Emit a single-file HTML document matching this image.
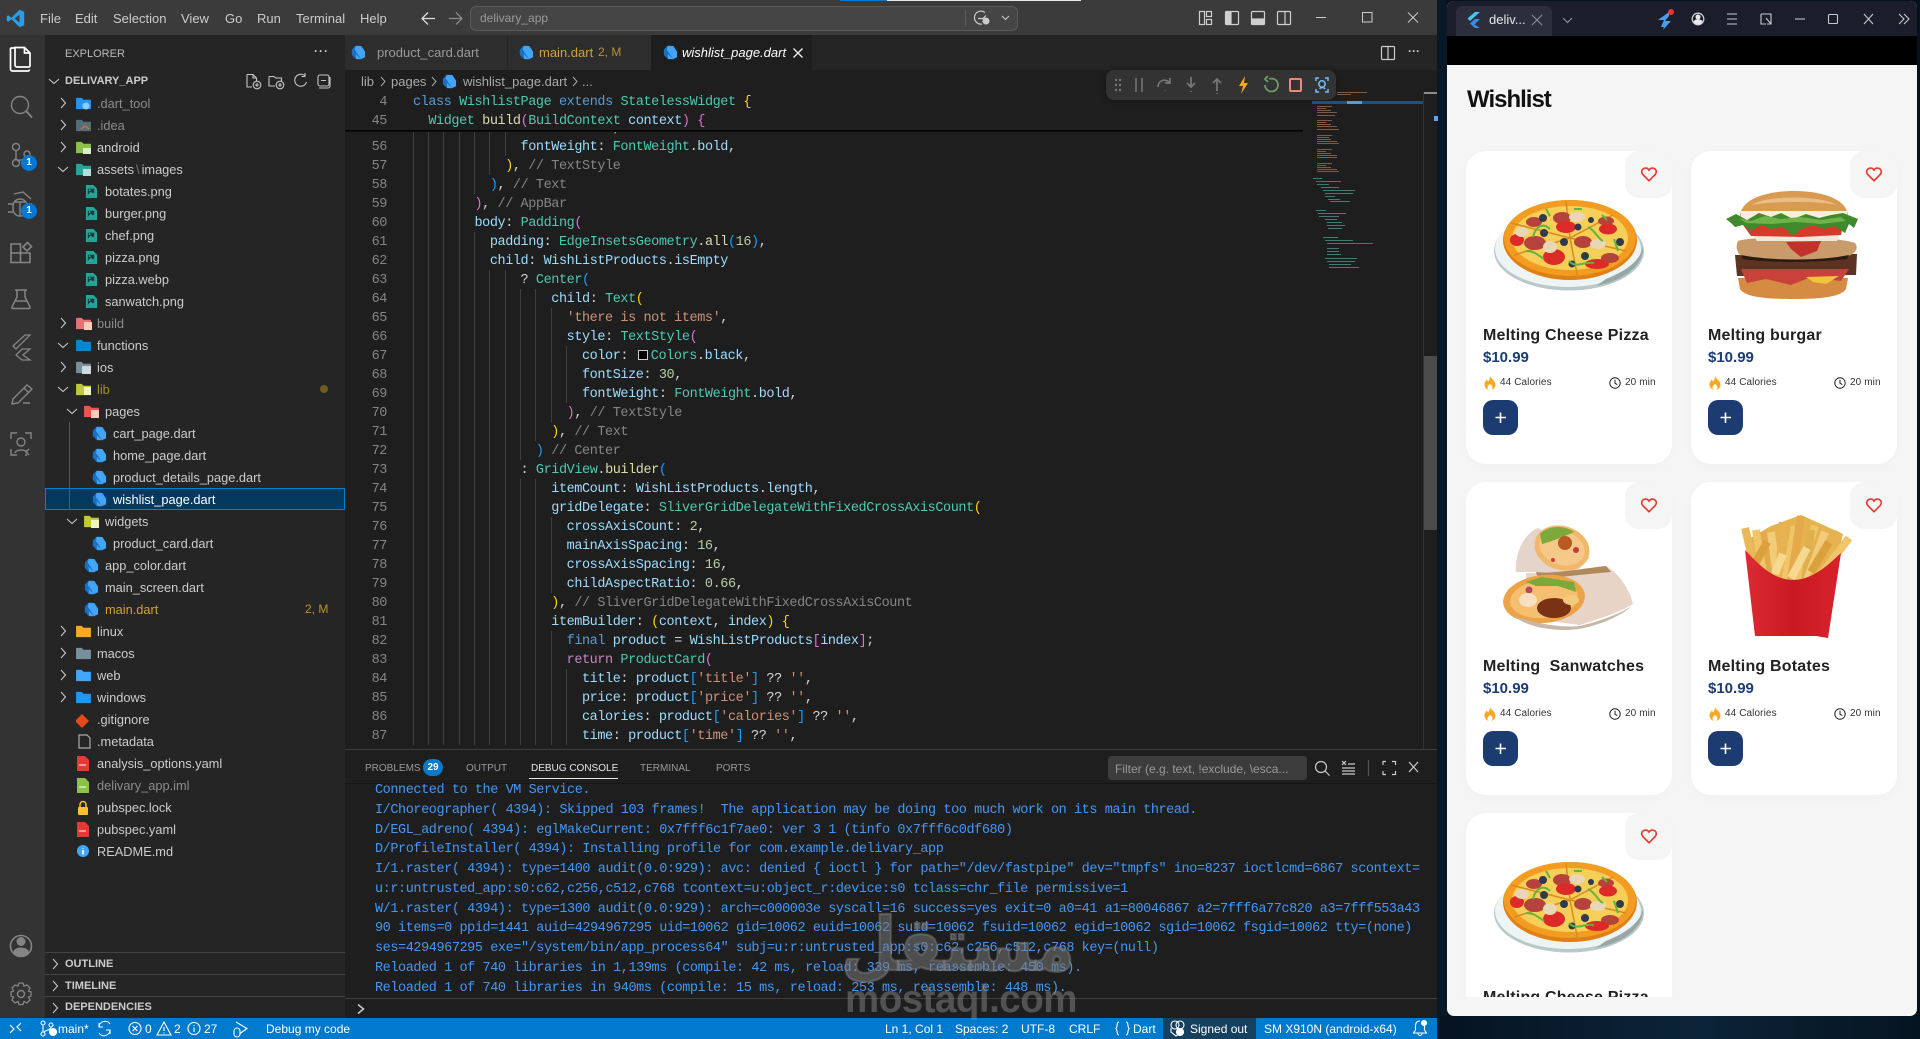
<!DOCTYPE html>
<html lang="en"><head><meta charset="utf-8"><title>delivary_app</title>
<style>
html,body{margin:0;padding:0;width:1920px;height:1039px;overflow:hidden;background:#06111c;font-family:"Liberation Sans",sans-serif}
div,span.a,svg.a,pre.a{position:absolute}
.t{position:absolute;white-space:pre}
.r{position:absolute;height:22px;line-height:23px;font-size:12.800px;color:#ccc;white-space:pre}
.m{position:absolute;top:9px;line-height:19px;font-size:13px;color:#ccc}
.tab{position:absolute;top:35px;height:35px;background:#2d2d2d}
.lbl{position:absolute;top:35px;line-height:35px;font-size:13px;white-space:pre}
.mono{font-family:"Liberation Mono",monospace;font-size:13.500px;letter-spacing:-.42px;white-space:pre}
.k{color:#569cd6}.c{color:#4ec9b0}.p{color:#9cdcfe}.f{color:#dcdcaa}.s{color:#ce9178}.n{color:#b5cea8}.g{color:#858585}.w{color:#d4d4d4}.y{color:#ffd700}.v{color:#da70d6}.b{color:#179fff}.u{color:#c586c0}
.pt{position:absolute;top:759px;line-height:20px;font-size:10px;color:#9a9a9a;white-space:pre}
.st{position:absolute;top:1020px;line-height:19px;font-size:12px;color:#fff;white-space:pre}
.sec{position:absolute;left:65px;line-height:22px;font-size:11px;font-weight:bold;color:#ccc;white-space:pre}
.card{position:absolute;width:206px;height:313px;background:#fff;border-radius:20px;box-shadow:0 3px 12px rgba(0,0,0,.018)}
.hb{position:absolute;right:0;top:0;width:47px;height:47px;background:#f5f5f5;border-radius:14px 20px 14px 14px}
.ct{position:absolute;left:17px;top:175px;line-height:20px;font-size:16px;font-weight:bold;color:#222;letter-spacing:.2px;white-space:pre}
.cp{position:absolute;left:17px;top:197px;line-height:19px;font-size:15px;font-weight:bold;color:#1c3c72;white-space:pre}
.cc{position:absolute;top:225px;line-height:14px;font-size:10px;color:#333;letter-spacing:.1px;white-space:pre}
.btn{position:absolute;left:17px;top:249px;width:35px;height:35px;background:#1c3b70;border-radius:10px}
</style></head>
<body>
<svg width="0" height="0" style="position:absolute">
<defs>
<symbol id="dart" viewBox="0 0 16 16"><path d="M5 .8 11 1 15 7 15 13 10.500 15.200 5.500 15 1 10.500 1 5z" fill="#42a5f5"/><path d="M5 .8 1 5 1 10.500 5.500 15 5 9.500 11 15.200 4 5z" fill="#1a6fc0"/></symbol>
<symbol id="img" viewBox="0 0 14 16"><path d="M1 1h8l4 4v10H1z" fill="#26a69a"/><path d="M3 5h7v8H3z" fill="#173f3d"/><path d="M3 12l3-4 2 2 2-1v4H3z" fill="#26a69a"/><circle cx="5" cy="6.500" r="1" fill="#26a69a"/></symbol>
<symbol id="fold" viewBox="0 0 16 14"><path d="M0 1h6l2 2h8v10H0z" fill="currentColor"/></symbol>
<symbol id="heart" viewBox="0 0 24 24"><path d="M12 21 4 13C1 10 2 5 6.500 4.200 9 3.800 11 5 12 7 13 5 15 3.800 17.500 4.200 22 5 23 10 20 13z" fill="none" stroke="#e53b30" stroke-width="2.200" stroke-linejoin="round"/></symbol>
<symbol id="flame" viewBox="0 0 12 14"><path d="M6 0C7 3 11 4 11.500 8.500 11.500 12 9 14 6 14S.5 12 .5 8.500C.5 6 2 5 2.500 3.500 3.500 4.500 4 5 4.300 5.500 5 4 6 2.500 6 0z" fill="#f9a825"/><path d="M6 8C7.500 9 8.500 10 8.500 11.500 8.500 13 7.300 14 6 14S3.500 13 3.500 11.500C3.500 10 5 9 6 8z" fill="#fff"/></symbol>
<symbol id="clock" viewBox="0 0 12 12"><circle cx="6" cy="6" r="5.200" fill="none" stroke="#222" stroke-width="1"/><path d="M6 2.800V6.300L8.300 7.500" fill="none" stroke="#222" stroke-width="1"/></symbol>
<symbol id="pizza" viewBox="0 0 206 160">
<ellipse cx="103" cy="100" rx="75" ry="39.500" fill="#b9c9c9"/><ellipse cx="102" cy="98" rx="73" ry="38" fill="#eef3f3"/><path d="M140 128C160 120 174 110 177 96 178 110 165 128 130 135z" fill="#98a6a8"/>
<ellipse cx="104" cy="89" rx="67" ry="40" fill="#e07f14"/><ellipse cx="104" cy="87" rx="66" ry="38" fill="#f29d22"/><ellipse cx="104" cy="87" rx="58" ry="32" fill="#f6cf58"/>
<path d="M104 87 100 50M104 87 147 64M104 87 160 100M104 87 112 128M104 87 48 104M104 87 45 72" stroke="#d98a20" stroke-width="1.500"/>
<g fill="#b5433c"><ellipse cx="68" cy="71" rx="8" ry="5"/><ellipse cx="96" cy="67" rx="9" ry="6"/><ellipse cx="69" cy="92" rx="11" ry="7"/><ellipse cx="117" cy="91" rx="9" ry="6"/><ellipse cx="140" cy="70" rx="8" ry="4.500"/><ellipse cx="144" cy="107" rx="9" ry="5"/></g>
<g fill="#dc2a28"><ellipse cx="100" cy="76" rx="10" ry="6"/><ellipse cx="88" cy="106" rx="11" ry="8"/><ellipse cx="142" cy="78" rx="9" ry="5.500"/><ellipse cx="131" cy="113" rx="12" ry="5"/><ellipse cx="51" cy="89" rx="7" ry="6"/></g>
<g fill="#e9d6b4"><ellipse cx="56" cy="81" rx="7" ry="5"/><ellipse cx="84" cy="96" rx="7" ry="6"/><ellipse cx="111" cy="66" rx="8" ry="5"/><ellipse cx="132" cy="93" rx="8" ry="5"/></g>
<g fill="#2f3b4d"><circle cx="77" cy="67" r="4"/><circle cx="78" cy="82" r="4"/><circle cx="112" cy="76" r="3.500"/><circle cx="125" cy="69" r="3"/><circle cx="98" cy="91" r="4"/><circle cx="154" cy="91" r="4"/><circle cx="119" cy="105" r="4"/><circle cx="106" cy="113" r="3.500"/></g>
<g fill="none" stroke="#62b53a" stroke-width="2"><path d="M67 86C70 74 78 72 84 78"/><path d="M60 100C68 100 72 104 78 108"/><path d="M103 110C110 118 118 110 128 112"/><path d="M122 76C130 80 132 88 137 90"/><path d="M80 58 84 65M108 58H116M136 64 141 69M148 88 152 100"/></g>
</symbol>
</defs>
</svg>

<!-- wallpaper strip tones -->
<div style="left:1437px;top:0;width:10px;height:1039px;background:#071826"></div>
<div style="left:1440px;top:1016px;width:480px;height:23px;background:linear-gradient(90deg,#061320,#0a2034 40%,#0b2338 55%,#061420)"></div>

<!-- VS CODE WINDOW -->
<div style="left:0;top:0;width:1437px;height:35px;background:#3b3b3b"></div>
<div style="left:840px;top:0;width:47px;height:1px;background:#0078d4"></div>
<div style="left:887px;top:0;width:194px;height:1px;background:#e8e8e8"></div>
<svg class="a" style="left:6px;top:9px" width="19" height="19" viewBox="0 0 24 24"><path d="M17 1 7 11 3 8 1 9v6l2 1 4-3 10 10 6-2.500V3.500zM17 7v10l-6-5z" fill="#2a9fe6" fill-rule="evenodd"/></svg>
<span class="m" style="left:40px">File</span><span class="m" style="left:75px">Edit</span><span class="m" style="left:113px">Selection</span><span class="m" style="left:181px">View</span><span class="m" style="left:225px">Go</span><span class="m" style="left:257px">Run</span><span class="m" style="left:296px">Terminal</span><span class="m" style="left:360px">Help</span>
<svg class="a" style="left:420px;top:10px" width="44" height="17" fill="none" stroke-width="1.300"><path d="M15 8.500H2M8 2.500 2 8.500l6 6" stroke="#ddd"/><path d="M29 8.500H42M36 2.500l6 6-6 6" stroke="#8a8a8a"/></svg>
<div style="left:470px;top:6px;width:546px;height:23px;background:#454545;border:1px solid #5a5a5a;border-radius:6px"></div>
<span class="t" style="left:480px;top:10px;line-height:17px;font-size:12px;color:#9a9a9a">delivary_app</span>
<div style="left:965px;top:10px;width:1px;height:16px;background:#5e5e5e"></div>
<svg class="a" style="left:972px;top:9px" width="42" height="18" fill="none" stroke="#ccc" stroke-width="1.200"><path d="M13 3.500A6.500 6.500 0 1 0 10 15"/><path d="M6 9.500h5l3-3" /><circle cx="14" cy="12" r="3.500" fill="#ccc" stroke="none"/><path d="M30 7l3.500 3.500L37 7" stroke-width="1.100"/></svg>
<svg class="a" style="left:1197px;top:9px" width="100" height="18" fill="none" stroke="#d0d0d0" stroke-width="1.200"><rect x="2.500" y="2.500" width="5" height="13"/><rect x="9.500" y="2.500" width="5" height="5"/><rect x="9.500" y="10.500" width="5" height="5"/><rect x="28.500" y="2.500" width="13" height="13" rx="1"/><rect x="29" y="3" width="5" height="12" fill="#d0d0d0"/><rect x="54.500" y="2.500" width="13" height="13" rx="1"/><rect x="55" y="10" width="12" height="5" fill="#d0d0d0"/><rect x="80.500" y="2.500" width="13" height="13" rx="1"/><path d="M88 3V15"/></svg>
<svg class="a" style="left:1314px;top:10px" width="106" height="15" fill="none" stroke="#ccc" stroke-width="1"><path d="M2 7.500H12"/><rect x="48.500" y="2.500" width="9.500" height="9.500"/><path d="M94 2.500l10 10M104 2.500l-10 10"/></svg>

<!-- Activity bar -->
<div style="left:0;top:35px;width:45px;height:983px;background:#333"></div>
<svg class="a" style="left:0;top:35px" width="45" height="983" fill="none" stroke="#858585" stroke-width="1.400">
<g stroke="#fff" stroke-width="1.700"><path d="M15 13h-3.500a1 1 0 0 0-1 1V34a2 2 0 0 0 2 2H28a1.500 1.500 0 0 0 1.500-1.500"/><path d="M15 12.500V30a2 2 0 0 0 2 2h12a1.500 1.500 0 0 0 1-1V18l-5.500-5.500z"/><path d="M24.500 12.500V18H30"/></g>
<circle cx="20" cy="70" r="8.500"/><path d="M26 76l6 6.500" stroke-width="1.800"/>
<circle cx="16" cy="112" r="3.500"/><circle cx="16" cy="128" r="3.500"/><circle cx="27" cy="119" r="3"/><path d="M16 115.500V124.500M27 122C26 126 20 124 17 126"/>
<path d="M14 159 23 157 31 164M13 171a7 7 0 0 1 14 0v3a7 7 0 0 1-14 0zM8 169h5M8 177h5M27 169h5M15 167h10M20 167v14"/>
<path d="M11 209h9.500v18.500H11zM11 218h19v9.500H11zM23 212l4.500-4.500 4 4-4.500 4.500z" stroke-width="1.600"/>
<path d="M15 255h12M17 255v7l-5 10a1 1 0 0 0 1 1.500h16a1 1 0 0 0 1-1.500l-5-10v-7M14.500 266h13" stroke-width="1.500"/>
<path d="M25 300h5L16 314l-3-3zM22 314h8l-7 6 7 5h-8l-6-5z" stroke-width="1.300"/>
<path d="M27 350 13 364 12 369l6-1 14-14zM24 353l5 5M23 368l7 0" stroke-width="1.400"/>
<path d="M11 404v-6h6M25 398h6v6M11 414v6h6M25 420h2" stroke-width="1.400"/><circle cx="21" cy="407" r="4"/><path d="M15 418c1-4 11-4 12 0M29 414l-3 3 3 3" stroke-width="1.400"/>
<circle cx="21" cy="911" r="10.500" stroke-width="1.600"/><circle cx="21" cy="906.500" r="3.800" fill="#858585"/><path d="M14 917c1-5 13-5 14 0v1a10 10 0 0 1-14 0z" fill="#858585"/>
<circle cx="21" cy="959" r="3.500"/><path d="M19 948h4l1 3 3-1 3 3-1.500 3 2.500 1v4l-2.500 1 1.500 3-3 3-3-1.500-1 3h-4l-1-3-3 1.500-3-3 1.500-3-2.500-1v-4l2.500-1-1.500-3 3-3 3 1z" stroke-width="1.300"/>
</svg>
<div style="left:21px;top:155px;width:16px;height:16px;border-radius:8px;background:#0078d4;color:#fff;font-size:10px;line-height:16px;text-align:center;font-weight:bold">1</div>
<div style="left:21px;top:203px;width:16px;height:16px;border-radius:8px;background:#0078d4;color:#fff;font-size:10px;line-height:16px;text-align:center;font-weight:bold">1</div>

<!-- Sidebar -->
<div style="left:45px;top:35px;width:300px;height:983px;background:#252526"></div>
<span class="t" style="left:65px;top:45px;line-height:18px;font-size:11px;color:#bbb">EXPLORER</span>
<span class="t" style="left:314px;top:42px;line-height:18px;font-size:12px;color:#ccc;font-weight:bold;letter-spacing:1px">···</span>
<span class="t" style="left:65px;top:70px;line-height:22px;font-size:11px;font-weight:bold;color:#ccc">DELIVARY_APP</span>
<svg class="a" style="left:245px;top:72px" width="90" height="18" fill="none" stroke="#c5c5c5" stroke-width="1.100"><path d="M2 2.500h6l3.500 3.500v3M2 2.500V15h5M8 2.500V6h3.500"/><circle cx="12" cy="13" r="3.800"/><path d="M10 13h4M12 11v4"/><path d="M24 4.500h5l1.500 1.500h6V9M24 4.500V14h6"/><circle cx="35" cy="13" r="3.800"/><path d="M33 13h4M35 11v4"/><path d="M60 4A6 6 0 1 0 61.500 10M60 1v3.500h-3.500" /><rect x="73" y="3" width="11" height="11" rx="2"/><path d="M76 8.500h5M74 16h9a2 2 0 0 0 2-2V5"/></svg>
<div style="left:45px;top:488px;width:298px;height:20px;background:#04395e;border:1px solid #007fd4"></div>
<div style="left:69px;top:422px;width:1px;height:88px;background:#585858"></div>
<svg class="a" style="left:45px;top:70px" width="300" height="800" fill="none" stroke="#c5c5c5" stroke-width="1.100">
<path d="M4 9l5 4.500 5-4.500M16 28l4.500 5-4.500 5M16 50l4.500 5-4.500 5M16 72l4.500 5-4.500 5M13 97l5 4.500 5-4.500M16 248l4.500 5-4.500 5M13 273l5 4.500 5-4.500M16 292l4.500 5-4.500 5M13 317l5 4.500 5-4.500M22 339l5 4.500 5-4.500M22 449l5 4.500 5-4.500M16 556l4.500 5-4.500 5M16 578l4.500 5-4.500 5M16 600l4.500 5-4.500 5M16 622l4.500 5-4.500 5"/>
</svg>
<svg class="a" style="left:0;top:0" width="345" height="900">
<g><use href="#fold" x="76" y="97" width="15" height="13" style="color:#2196f3"/><circle cx="86" cy="106" r="3.500" fill="#90caf9"/>
<use href="#fold" x="76" y="119" width="15" height="13" style="color:#546e7a"/><path d="M81 129l4-3 4 3" stroke="#e8673a" fill="none" stroke-width="1.300"/>
<use href="#fold" x="76" y="141" width="15" height="13" style="color:#8bc34a"/><rect x="83" y="148" width="8" height="6" fill="#dcedc8"/>
<use href="#fold" x="76" y="163" width="15" height="13" style="color:#26a69a"/><rect x="83" y="169" width="8" height="7" fill="#b2dfdb"/>
<use href="#fold" x="76" y="317" width="15" height="13" style="color:#e57373"/><rect x="84" y="322" width="8" height="8" fill="#ffccbc"/>
<use href="#fold" x="76" y="339" width="15" height="13" style="color:#0288d1"/>
<use href="#fold" x="76" y="361" width="15" height="13" style="color:#78909c"/><rect x="82" y="366" width="9" height="8" fill="#cfd8dc"/>
<use href="#fold" x="76" y="383" width="15" height="13" style="color:#c0ca33"/><rect x="84" y="387" width="7" height="8" fill="#f0f4c3"/>
<use href="#fold" x="84" y="405" width="15" height="13" style="color:#ef5350"/><rect x="91" y="410" width="8" height="8" fill="#ffccbc"/>
<use href="#fold" x="84" y="515" width="15" height="13" style="color:#c0ca33"/><rect x="91" y="520" width="8" height="8" fill="#f0f4c3"/>
<use href="#fold" x="76" y="625" width="15" height="13" style="color:#f9a825"/>
<use href="#fold" x="76" y="647" width="15" height="13" style="color:#78909c"/>
<use href="#fold" x="76" y="669" width="15" height="13" style="color:#42a5f5"/>
<use href="#fold" x="76" y="691" width="15" height="13" style="color:#2196f3"/></g>
<g><use href="#img" x="85" y="184" width="13" height="15"/><use href="#img" x="85" y="206" width="13" height="15"/><use href="#img" x="85" y="228" width="13" height="15"/><use href="#img" x="85" y="250" width="13" height="15"/><use href="#img" x="85" y="272" width="13" height="15"/><use href="#img" x="85" y="294" width="13" height="15"/></g>
<g><use href="#dart" x="92" y="426" width="15" height="15"/><use href="#dart" x="92" y="448" width="15" height="15"/><use href="#dart" x="92" y="470" width="15" height="15"/><use href="#dart" x="92" y="492" width="15" height="15"/><use href="#dart" x="92" y="536" width="15" height="15"/><use href="#dart" x="84" y="558" width="15" height="15"/><use href="#dart" x="84" y="580" width="15" height="15"/><use href="#dart" x="84" y="602" width="15" height="15"/></g>
<path d="M83 714l6-6 7 7-7 7-6-6z" fill="#e64a19" transform="translate(-7 6)"/>
<path d="M79 735h8l3 3v10H79z" fill="none" stroke="#aaa" stroke-width="1.200"/>
<path d="M77 756h8l4 4v11H77z" fill="#e53935"/><path d="M79 765h7" stroke="#fff"/>
<path d="M77 778h8l4 4v11H77z" fill="#8bc34a"/><path d="M79 787h7" stroke="#fff"/>
<rect x="78" y="807" width="10" height="8" rx="1" fill="#fbc02d"/><path d="M80 807v-2.500a3 3 0 0 1 6 0V807" fill="none" stroke="#fbc02d" stroke-width="1.500"/>
<path d="M77 822h8l4 4v11H77z" fill="#e53935"/><path d="M79 831h7" stroke="#fff"/>
<circle cx="83" cy="851" r="6" fill="#42a5f5"/><path d="M83 848v.5M83 850v4.500" stroke="#fff" stroke-width="1.700"/>
</svg>
<span class="r" style="left:97px;top:92px;color:#8c8c8c">.dart_tool</span>
<span class="r" style="left:97px;top:114px;color:#8c8c8c">.idea</span>
<span class="r" style="left:97px;top:136px">android</span>
<span class="r" style="left:97px;top:158px">assets<span style="color:#777;margin:0 2px">\</span>images</span>
<span class="r" style="left:105px;top:180px">botates.png</span>
<span class="r" style="left:105px;top:202px">burger.png</span>
<span class="r" style="left:105px;top:224px">chef.png</span>
<span class="r" style="left:105px;top:246px">pizza.png</span>
<span class="r" style="left:105px;top:268px">pizza.webp</span>
<span class="r" style="left:105px;top:290px">sanwatch.png</span>
<span class="r" style="left:97px;top:312px;color:#8c8c8c">build</span>
<span class="r" style="left:97px;top:334px">functions</span>
<span class="r" style="left:97px;top:356px">ios</span>
<span class="r" style="left:97px;top:378px;color:#a88f2a">lib</span>
<span class="r" style="left:105px;top:400px">pages</span>
<span class="r" style="left:113px;top:422px">cart_page.dart</span>
<span class="r" style="left:113px;top:444px">home_page.dart</span>
<span class="r" style="left:113px;top:466px">product_details_page.dart</span>
<span class="r" style="left:113px;top:488px;color:#fff">wishlist_page.dart</span>
<span class="r" style="left:105px;top:510px">widgets</span>
<span class="r" style="left:113px;top:532px">product_card.dart</span>
<span class="r" style="left:105px;top:554px">app_color.dart</span>
<span class="r" style="left:105px;top:576px">main_screen.dart</span>
<span class="r" style="left:105px;top:598px;color:#d0a236">main.dart</span>
<span class="r" style="left:305px;top:598px;color:#b8923a;font-size:12px">2, M</span>
<span class="r" style="left:97px;top:620px">linux</span>
<span class="r" style="left:97px;top:642px">macos</span>
<span class="r" style="left:97px;top:664px">web</span>
<span class="r" style="left:97px;top:686px">windows</span>
<span class="r" style="left:97px;top:708px">.gitignore</span>
<span class="r" style="left:97px;top:730px">.metadata</span>
<span class="r" style="left:97px;top:752px">analysis_options.yaml</span>
<span class="r" style="left:97px;top:774px;color:#8c8c8c">delivary_app.iml</span>
<span class="r" style="left:97px;top:796px">pubspec.lock</span>
<span class="r" style="left:97px;top:818px">pubspec.yaml</span>
<span class="r" style="left:97px;top:840px">README.md</span>
<div style="left:320px;top:385px;width:8px;height:8px;border-radius:4px;background:#6e5c1e"></div>
<div style="left:45px;top:952px;width:300px;height:1px;background:#444"></div>
<div style="left:45px;top:974px;width:300px;height:1px;background:#444"></div>
<div style="left:45px;top:996px;width:300px;height:1px;background:#444"></div>
<span class="sec" style="top:953px">OUTLINE</span><span class="sec" style="top:975px">TIMELINE</span><span class="sec" style="top:996px">DEPENDENCIES</span>
<svg class="a" style="left:50px;top:952px" width="12" height="66" fill="none" stroke="#c5c5c5" stroke-width="1.100"><path d="M3 7l4.500 5L3 17M3 29l4.500 5L3 39M3 51l4.500 5L3 61"/></svg>

<!-- Editor -->
<div style="left:345px;top:35px;width:1092px;height:715px;background:#1e1e1e"></div>
<div style="left:345px;top:35px;width:1092px;height:35px;background:#252526"></div>
<div class="tab" style="left:345px;width:162px"></div><div class="tab" style="left:508px;width:143px"></div><div class="tab" style="left:651px;width:161px;background:#1e1e1e"></div>
<svg class="a" style="left:0;top:0" width="700" height="90"><use href="#dart" x="351" y="45" width="15" height="15"/><use href="#dart" x="519" y="45" width="15" height="15"/><use href="#dart" x="663" y="45" width="15" height="15"/><use href="#dart" x="442" y="74" width="15" height="15"/></svg>
<span class="lbl" style="left:377px;color:#9a9a9a">product_card.dart</span>
<span class="lbl" style="left:539px;color:#d0a236">main.dart</span><span class="lbl" style="left:598px;color:#b8923a;font-size:12px">2, M</span>
<span class="lbl" style="left:682px;color:#fff;font-style:italic">wishlist_page.dart</span>
<svg class="a" style="left:792px;top:47px" width="12" height="12" fill="none" stroke="#eee" stroke-width="1.300"><path d="M1.500 1.500l9 9M10.500 1.500l-9 9"/></svg>
<svg class="a" style="left:1380px;top:45px" width="16" height="16" fill="none" stroke="#ccc" stroke-width="1.200"><rect x="1.500" y="1.500" width="13" height="13" rx="1"/><path d="M8 2V14"/></svg>
<span class="t" style="left:1408px;top:42px;line-height:18px;font-size:12px;color:#ccc;font-weight:bold">···</span>
<span class="t" style="left:361px;top:72px;line-height:19px;font-size:13px;color:#a9a9a9">lib</span><span class="t" style="left:391px;top:72px;line-height:19px;font-size:13px;color:#a9a9a9">pages</span><span class="t" style="left:463px;top:72px;line-height:19px;font-size:13px;color:#a9a9a9">wishlist_page.dart</span><span class="t" style="left:582px;top:72px;line-height:19px;font-size:13px;color:#a9a9a9">...</span>
<svg class="a" style="left:378px;top:74px" width="205" height="15" fill="none" stroke="#aaa" stroke-width="1"><path d="M3 3l4 4.500-4 4.500M54 3l4 4.500-4 4.500M195 3l4 4.500-4 4.500"/></svg>

<svg class="a" style="left:345px;top:0" width="970" height="750" fill="none" stroke="#404040" stroke-width="1">
<path transform="translate(-345 0)" d="M413.500 118V745M428.500 118V745M443.500 118V745M459.500 118V745M474.500 118V194M474.500 232V745M489.500 118V175M489.500 270V745M505.500 118V156M505.500 270V745M520.500 289V460M520.500 479V745M535.500 289V441M535.500 479V745M551.500 308V422M551.500 517V593M551.500 631V745M566.500 346V403M566.500 669V745"/>
</svg>
<pre class="a mono" style="left:413px;top:119px;margin:0;line-height:19px;color:#9cdcfe">              <span class="p">fontSize</span><span class="w">: </span><span class="n">20</span><span class="w">,</span>
              <span class="p">fontWeight</span><span class="w">: </span><span class="c">FontWeight</span><span class="w">.</span><span class="p">bold</span><span class="w">,</span>
            <span class="y">)</span><span class="w">,</span> <span class="g">// TextStyle</span>
          <span class="b">)</span><span class="w">,</span> <span class="g">// Text</span>
        <span class="v">)</span><span class="w">,</span> <span class="g">// AppBar</span>
        <span class="p">body</span><span class="w">: </span><span class="c">Padding</span><span class="v">(</span>
          <span class="p">padding</span><span class="w">: </span><span class="c">EdgeInsetsGeometry</span><span class="w">.</span><span class="f">all</span><span class="b">(</span><span class="n">16</span><span class="b">)</span><span class="w">,</span>
          <span class="p">child</span><span class="w">: </span><span class="p">WishListProducts</span><span class="w">.</span><span class="p">isEmpty</span>
              <span class="w">? </span><span class="c">Center</span><span class="b">(</span>
                  <span class="p">child</span><span class="w">: </span><span class="c">Text</span><span class="y">(</span>
                    <span class="s">'there is not items'</span><span class="w">,</span>
                    <span class="p">style</span><span class="w">: </span><span class="c">TextStyle</span><span class="v">(</span>
                      <span class="p">color</span><span class="w">: </span><span style="display:inline-block;width:10px;height:10px;border:1px solid #ccc;background:#000;margin:0 3px 0 2px;box-sizing:border-box;vertical-align:-1px"></span><span class="c">Colors</span><span class="w">.</span><span class="p">black</span><span class="w">,</span>
                      <span class="p">fontSize</span><span class="w">: </span><span class="n">30</span><span class="w">,</span>
                      <span class="p">fontWeight</span><span class="w">: </span><span class="c">FontWeight</span><span class="w">.</span><span class="p">bold</span><span class="w">,</span>
                    <span class="v">)</span><span class="w">,</span> <span class="g">// TextStyle</span>
                  <span class="y">)</span><span class="w">,</span> <span class="g">// Text</span>
                <span class="b">)</span> <span class="g">// Center</span>
              <span class="w">: </span><span class="c">GridView</span><span class="w">.</span><span class="f">builder</span><span class="b">(</span>
                  <span class="p">itemCount</span><span class="w">: </span><span class="p">WishListProducts</span><span class="w">.</span><span class="p">length</span><span class="w">,</span>
                  <span class="p">gridDelegate</span><span class="w">: </span><span class="c">SliverGridDelegateWithFixedCrossAxisCount</span><span class="y">(</span>
                    <span class="p">crossAxisCount</span><span class="w">: </span><span class="n">2</span><span class="w">,</span>
                    <span class="p">mainAxisSpacing</span><span class="w">: </span><span class="n">16</span><span class="w">,</span>
                    <span class="p">crossAxisSpacing</span><span class="w">: </span><span class="n">16</span><span class="w">,</span>
                    <span class="p">childAspectRatio</span><span class="w">: </span><span class="n">0.66</span><span class="w">,</span>
                  <span class="y">)</span><span class="w">,</span> <span class="g">// SliverGridDelegateWithFixedCrossAxisCount</span>
                  <span class="p">itemBuilder</span><span class="w">: </span><span class="y">(</span><span class="p">context</span><span class="w">, </span><span class="p">index</span><span class="y">)</span> <span class="y">{</span>
                    <span class="k">final</span> <span class="p">product</span> <span class="w">= </span><span class="p">WishListProducts</span><span class="v">[</span><span class="p">index</span><span class="v">]</span><span class="w">;</span>
                    <span class="u">return</span> <span class="c">ProductCard</span><span class="v">(</span>
                      <span class="p">title</span><span class="w">: </span><span class="p">product</span><span class="b">[</span><span class="s">'title'</span><span class="b">]</span> <span class="w">?? </span><span class="s">''</span><span class="w">,</span>
                      <span class="p">price</span><span class="w">: </span><span class="p">product</span><span class="b">[</span><span class="s">'price'</span><span class="b">]</span> <span class="w">?? </span><span class="s">''</span><span class="w">,</span>
                      <span class="p">calories</span><span class="w">: </span><span class="p">product</span><span class="b">[</span><span class="s">'calories'</span><span class="b">]</span> <span class="w">?? </span><span class="s">''</span><span class="w">,</span>
                      <span class="p">time</span><span class="w">: </span><span class="p">product</span><span class="b">[</span><span class="s">'time'</span><span class="b">]</span> <span class="w">?? </span><span class="s">''</span><span class="w">,</span></pre>
<pre class="a mono" style="left:345px;top:138px;width:42px;margin:0;line-height:19px;color:#858585;text-align:right">56
57
58
59
60
61
62
63
64
65
66
67
68
69
70
71
72
73
74
75
76
77
78
79
80
81
82
83
84
85
86
87</pre>
<div style="left:345px;top:92px;width:967px;height:38px;background:#1e1e1e"></div>
<div style="left:345px;top:130px;width:958px;height:2px;background:linear-gradient(#000,#111)"></div>
<pre class="a mono" style="left:345px;top:93px;width:42px;margin:0;line-height:19px;color:#858585;text-align:right">4
45</pre>
<pre class="a mono" style="left:413px;top:93px;margin:0;line-height:19px"><span class="k">class</span> <span class="c">WishlistPage</span> <span class="k">extends</span> <span class="c">StatelessWidget</span> <span class="y">{</span>
  <span class="c">Widget</span> <span class="f">build</span><span class="v">(</span><span class="c">BuildContext</span> <span class="p">context</span><span class="v">)</span> <span class="v">{</span></pre>

<!-- debug toolbar -->
<div style="left:1106px;top:70px;width:230px;height:30px;background:#333;border-radius:8px;box-shadow:0 1px 6px rgba(0,0,0,.35)"></div>
<svg class="a" style="left:1106px;top:70px" width="230" height="30" fill="none" stroke-width="1.500">
<g fill="#777"><circle cx="10" cy="10" r="1.200"/><circle cx="14" cy="10" r="1.200"/><circle cx="10" cy="15" r="1.200"/><circle cx="14" cy="15" r="1.200"/><circle cx="10" cy="20" r="1.200"/><circle cx="14" cy="20" r="1.200"/></g>
<path d="M30 8V22M36 8V22" stroke="#777"/>
<path d="M52 17a6.500 6.500 0 0 1 11-5M64 8v5h-5M59 20.500v.5" stroke="#777" stroke-width="1.700"/>
<path d="M85 7V17M81 13l4 4 4-4M85 21v1" stroke="#777" stroke-width="1.700"/>
<path d="M111 21V10M107 13l4-4 4 4M111 23v1" stroke="#777" stroke-width="1.700"/>
<path d="M139 6l-6 10h4l-2 8 7-11h-4z" fill="#f5a623" stroke="none"/>
<path d="M163 9a6.500 6.500 0 1 1-4 6M162 6l-3 3 3 3" stroke="#6f9f6b" stroke-width="1.700"/>
<rect x="184" y="9" width="11" height="12" rx="1" stroke="#f48771" stroke-width="2"/>
<path d="M210 11V8h3M219 8h3v3M210 19v3h3M219 22h3v-3" stroke="#75beff"/><circle cx="216" cy="14" r="3.200" stroke="#75beff"/><path d="M214 19c0-2 4-2 5 0" stroke="#75beff"/>
</svg>

<!-- minimap -->
<svg class="a" style="left:1312px;top:92px" width="125" height="190" shape-rendering="crispEdges" fill="none" stroke-width="1">
<path transform="translate(-1312 -92)" stroke="#7e5a47" d="M1337 92.500h30M1337 94.500h14M1317 106.500h15M1317 108.500h9M1317 110.500h14M1317 112.500h20M1317 115.500h18M1317 120.500h15M1317 122.500h9M1317 124.500h14M1317 126.500h20M1317 129.500h22M1317 135.500h15M1317 137.500h12M1317 139.500h14M1317 141.500h20M1317 143.500h22M1317 149.500h15M1317 151.500h9M1317 153.500h14M1317 155.500h20M1317 157.500h20M1317 163.500h15M1317 165.500h9M1317 167.500h14M1317 169.500h20M1317 171.500h22"/>
<path transform="translate(-1312 -92)" stroke="#3f7d74" d="M1313 178.500h9M1316 181.500h25M1317 184.500h12M1321 187.500h18M1323 190.500h32M1325 193.500h28M1325 196.500h10M1328 199.500h12M1330 201.500h20M1316 210.500h10M1318 213.500h28M1319 216.500h20M1325 219.500h12M1327 222.500h15M1327 225.500h18M1328 228.500h14M1323 237.500h15M1325 240.500h28M1327 243.500h46M1327 248.500h12M1327 251.500h12M1327 254.500h14M1325 258.500h32M1327 261.500h28M1329 264.500h22M1329 267.500h30"/>
<path d="M0 10.500h111" stroke="#264f78" stroke-width="3"/><path d="M35 10.500h15" stroke="#569cd6" stroke-width="3"/>
</svg>
<div style="left:1423px;top:92px;width:1px;height:658px;background:#333"></div>
<div style="left:1424px;top:92px;width:13px;height:2px;background:#8c8c8c"></div>
<div style="left:1424px;top:356px;width:13px;height:174px;background:#4b4b4b"></div>
<div style="left:1434px;top:116px;width:4px;height:5px;background:#5aa6f5"></div>

<!-- Panel -->
<div style="left:345px;top:749px;width:1092px;height:269px;background:#1e1e1e;border-top:1px solid #3e3e3e;box-sizing:border-box"></div>
<div style="left:345px;top:783px;width:1092px;height:1px;background:#141414"></div>
<span class="pt" style="left:365px">PROBLEMS</span>
<div style="left:423px;top:759px;width:20px;height:17px;border-radius:9px;background:#0b79c9;color:#fff;font-size:10px;line-height:17px;text-align:center;font-weight:bold">29</div>
<span class="pt" style="left:466px">OUTPUT</span><span class="pt" style="left:531px;color:#e7e7e7">DEBUG CONSOLE</span><span class="pt" style="left:640px">TERMINAL</span><span class="pt" style="left:716px">PORTS</span>
<div style="left:529px;top:778px;width:89px;height:1px;background:#e7e7e7"></div>
<div style="left:1108px;top:756px;width:199px;height:24px;background:#3c3c3c;border-radius:3px"></div>
<span class="t" style="left:1115px;top:760px;line-height:18px;font-size:12px;color:#9a9a9a">Filter (e.g. text, !exclude, \esca...</span>
<svg class="a" style="left:1312px;top:759px" width="112" height="18" fill="none" stroke="#ccc" stroke-width="1.200"><circle cx="9" cy="8" r="5.500"/><path d="M13 12l4.500 4.500"/><path d="M30 2l4 4M34 2l-4 4M36 5h7M30 9h13M30 12h13M30 15h13"/><path d="M56.500 1V17" stroke="#555"/><path d="M71 6V2.500h3M80 2.500h3.500V6M71 12v3.500h3M80 15.500h3.500V12"/><path d="M97 3l9 10M106 3l-9 10"/></svg>
<pre class="a mono" style="left:375px;top:781px;width:1045px;height:217px;overflow:hidden;margin:0;line-height:19.750px;color:#4497f5">Connected to the VM Service.
I/Choreographer( 4394): Skipped 103 frames!  The application may be doing too much work on its main thread.
D/EGL_adreno( 4394): eglMakeCurrent: 0x7fff6c1f7ae0: ver 3 1 (tinfo 0x7fff6c0df680)
D/ProfileInstaller( 4394): Installing profile for com.example.delivary_app
I/1.raster( 4394): type=1400 audit(0.0:929): avc: denied { ioctl } for path="/dev/fastpipe" dev="tmpfs" ino=8237 ioctlcmd=6867 scontext=
u:r:untrusted_app:s0:c62,c256,c512,c768 tcontext=u:object_r:device:s0 tclass=chr_file permissive=1
W/1.raster( 4394): type=1300 audit(0.0:929): arch=c000003e syscall=16 success=yes exit=0 a0=41 a1=80046867 a2=7fff6a77c820 a3=7fff553a43
90 items=0 ppid=1441 auid=4294967295 uid=10062 gid=10062 euid=10062 suid=10062 fsuid=10062 egid=10062 sgid=10062 fsgid=10062 tty=(none)
ses=4294967295 exe="/system/bin/app_process64" subj=u:r:untrusted_app:s0:c62,c256,c512,c768 key=(null)
Reloaded 1 of 740 libraries in 1,139ms (compile: 42 ms, reload: 339 ms, reassemble: 450 ms).
Reloaded 1 of 740 libraries in 940ms (compile: 15 ms, reload: 253 ms, reassemble: 448 ms).</pre>
<div style="left:345px;top:998px;width:1092px;height:1px;background:#3e3e3e"></div>
<svg class="a" style="left:356px;top:1003px" width="10" height="12" fill="none" stroke="#ccc" stroke-width="1.500"><path d="M2 1.500 7.500 6 2 10.500"/></svg>

<!-- Status bar -->
<div style="left:0;top:1018px;width:1437px;height:21px;background:#007acc"></div>
<div style="left:1163px;top:1018px;width:93px;height:21px;background:#16405f"></div>
<svg class="a" style="left:0;top:1018px" width="1437" height="21" fill="none" stroke="#fff" stroke-width="1.100">
<path d="M10 7l4 4-4 4M21 5l-4 4 4 4" stroke-width="1.200"/>
<circle cx="43" cy="5" r="2"/><circle cx="43" cy="16" r="2"/><circle cx="51" cy="7" r="2"/><path d="M43 7V14M51 9c0 3-5 3-7 5"/><circle cx="53" cy="14" r="3.500" fill="#fff"/>
<path d="M110 6A6 6 0 0 0 99 9M99 15a6 6 0 0 0 11-3M99 5v4h4M110 16v-4h-4"/>
<circle cx="135" cy="10.500" r="6"/><path d="M132.500 8l5 5M137.500 8l-5 5"/>
<path d="M164 4l7 13h-14zM164 9v4M164 14.500v1"/>
<circle cx="194" cy="10.500" r="6"/><path d="M194 7v1M194 9.500V14"/>
<path d="M236 4l11 6.500-7 5M234 13a3 3 0 0 1 6 0v3a3 3 0 0 1-6 0z"/>
<path d="M1119 4c-3 0-1 6-3.500 6.500 2.500.5.500 6.500 3.500 6.500M1126 4c3 0 1 6 3.500 6.500-2.500.5-.5 6.500-3.500 6.500"/>
<circle cx="1175" cy="7" r="4"/><circle cx="1180" cy="7" r="4"/><path d="M1171 10v4l5 4 5-4v-4"/><circle cx="1180" cy="14" r="3.500" fill="#fff"/>
<path d="M1420 3c-3 0-4.500 2-4.500 5v4l-2 3h13l-2-3V8M1418 15.500a2 2 0 0 0 4 0"/><circle cx="1424" cy="5" r="2.500" fill="#fff"/>
</svg>
<span class="st" style="left:58px">main*</span><span class="st" style="left:145px">0</span><span class="st" style="left:174px">2</span><span class="st" style="left:204px">27</span><span class="st" style="left:266px">Debug my code</span>
<span class="st" style="left:885px">Ln 1, Col 1</span><span class="st" style="left:955px">Spaces: 2</span><span class="st" style="left:1021px">UTF-8</span><span class="st" style="left:1069px">CRLF</span><span class="st" style="left:1133px">Dart</span><span class="st" style="left:1190px">Signed out</span><span class="st" style="left:1264px">SM X910N (android-x64)</span>

<!-- watermark -->
<span class="t" style="left:845px;top:904px;width:230px;line-height:84px;font-size:64px;font-weight:bold;color:rgba(125,125,125,.5);-webkit-text-stroke:2px rgba(125,125,125,.5);font-family:'DejaVu Sans',sans-serif;text-align:center;transform:scaleY(1.150)" dir="rtl" lang="ar">مستقل</span>
<span class="t" style="left:845px;top:980px;line-height:40px;font-size:38.500px;font-weight:bold;color:rgba(125,125,125,.55);letter-spacing:-.5px">mostaql.com</span>

<!-- EMULATOR -->
<div style="left:1447px;top:1px;width:470px;height:1015px;background:#f5f5f5;border-radius:7px;overflow:hidden"></div>
<div style="left:1447px;top:1px;width:470px;height:35px;background:#1c1d2b;border-radius:7px 7px 0 0"></div>
<div style="left:1447px;top:36px;width:470px;height:29px;background:#000"></div>
<div style="left:1456px;top:6px;width:96px;height:30px;background:#2d2e3c;border-radius:7px 7px 0 0"></div>
<svg class="a" style="left:1466px;top:12px" width="14" height="16"><path d="M9 0h5L4 9 1.500 6.500z" fill="#47c5fb"/><path d="M9 7h5L8.500 12.500 14 16H9L4 11.500z" fill="#3a8ee6"/></svg>
<span class="t" style="left:1489px;top:11px;line-height:18px;font-size:13px;color:#e8e8e8">deliv...</span>
<svg class="a" style="left:1530px;top:12px" width="48" height="16" fill="none" stroke="#8a8a95" stroke-width="1.200"><path d="M2 3l10 10M12 3 2 13"/><path d="M33 6l4.500 4.500L42 6" /></svg>
<svg class="a" style="left:1655px;top:6px" width="260" height="26" fill="none" stroke="#c9c9d2" stroke-width="1.100">
<path d="M14 6 3 14h6l-3 7h3l-1 3 8-9h-6l4-5z" fill="#4a9cf0" stroke="none"/><circle cx="16" cy="6" r="3" fill="#e53935" stroke="none"/>
<circle cx="43" cy="13" r="5.800" stroke-width="1.300"/><circle cx="43" cy="11" r="2.500" fill="#e8e8e8" stroke="none"/><path d="M38.500 15.500c1-3 8-3 9 0l-2 3h-5z" fill="#e8e8e8" stroke="none"/>
<path d="M72 8H82M72 13H82M72 18H82"/><path d="M106 8h10v6M106 8v10h5M111 12l5 6M116 14v4h-4"/>
<path d="M140 13H150"/><rect x="173.500" y="8.500" width="9" height="9" rx="1"/><path d="M209 8l9 10M218 8l-9 10"/><path d="M244 8l5 5-5 5M249 8l5 5-5 5"/>
</svg>

<div style="left:1447px;top:65px;width:470px;height:932px;overflow:hidden">
<span class="t" style="left:20px;top:20px;line-height:30px;font-size:24px;font-weight:bold;color:#111;letter-spacing:-1px">Wishlist</span>

<div class="card" style="left:19px;top:86px"><div class="hb"></div><svg class="a" style="left:174px;top:14px" width="18" height="18"><use href="#heart"/></svg>
<svg class="a" style="left:0;top:0" width="206" height="160"><use href="#pizza"/></svg>
<span class="ct">Melting Cheese Pizza</span><span class="cp">$10.99</span>
<svg class="a" style="left:18px;top:225px" width="12" height="14"><use href="#flame"/></svg><span class="cc" style="left:34px">44 Calories</span>
<svg class="a" style="left:143px;top:226px" width="12" height="12"><use href="#clock"/></svg><span class="cc" style="left:159px">20 min</span>
<div class="btn"><svg width="35" height="35" stroke="#fff" stroke-width="1.600"><path d="M17.500 12.500V23M12.500 17.500H23"/></svg></div></div>

<div class="card" style="left:244px;top:86px"><div class="hb"></div><svg class="a" style="left:174px;top:14px" width="18" height="18"><use href="#heart"/></svg>
<svg class="a" style="left:0;top:0" width="206" height="160">
<path d="M47 127H157L155 138C150 146 130 148 102 148 74 148 54 146 49 138z" fill="#d58c42"/>
<path d="M44 104 166 103 165 124 46 125z" fill="#5e3222"/>
<path d="M50 118H158L150 130 120 126 100 134 75 128 56 132z" fill="#c8423a"/><path d="M115 126 148 125 135 133 122 131z" fill="#f2c33d"/>
<path d="M47 90C60 85 140 84 164 92 170 100 158 107 150 106 120 112 70 110 54 107 46 104 44 96 47 90z" fill="#c99a6a"/><path d="M95 91 130 90 126 100 110 106 100 98z" fill="#c0322b"/><path d="M50 104C80 110 130 110 158 104L156 108C120 112 80 112 52 108z" fill="#2b1a12"/>
<path d="M60 81H150L146 90H66z" fill="#efe9dc"/>
<path d="M52 74H152L150 84 110 86 60 85z" fill="#d63a2a"/>
<path d="M49 66C49 48 75 40 103 40 131 40 157 48 157 66z" fill="#d99a52"/><path d="M60 54C75 44 130 44 146 54 130 50 80 50 60 54z" fill="#e9bd84"/>
<path d="M50 60H156V68H50z" fill="#f4efe2"/>
<path d="M35 68 45 63 56 69 68 62 80 66 90 62 102 68 115 63 128 67 140 64 152 62 167 68 163 77 158 73 154 82 143 75 133 78 122 74 110 78 102 85 92 76 80 78 70 74 60 80 52 74 44 76 40 72z" fill="#3f8a2c"/><path d="M48 67 60 70 74 65 90 68 110 66 130 69 150 66 155 70 130 73 105 71 80 73 55 72z" fill="#6fb248"/>
</svg>
<span class="ct">Melting burgar</span><span class="cp">$10.99</span>
<svg class="a" style="left:18px;top:225px" width="12" height="14"><use href="#flame"/></svg><span class="cc" style="left:34px">44 Calories</span>
<svg class="a" style="left:143px;top:226px" width="12" height="12"><use href="#clock"/></svg><span class="cc" style="left:159px">20 min</span>
<div class="btn"><svg width="35" height="35" stroke="#fff" stroke-width="1.600"><path d="M17.500 12.500V23M12.500 17.500H23"/></svg></div></div>

<div class="card" style="left:19px;top:417px"><div class="hb"></div><svg class="a" style="left:174px;top:14px" width="18" height="18"><use href="#heart"/></svg>
<svg class="a" style="left:0;top:0" width="206" height="160">
<path d="M50 90C48 70 60 50 72 46L124 75 110 90z" fill="#e5d4c9"/>
<ellipse cx="96" cy="66" rx="28" ry="22" fill="#f1b86a" transform="rotate(18 96 66)"/><ellipse cx="96" cy="66" rx="23" ry="17" fill="#f4c98a" transform="rotate(18 96 66)"/>
<path d="M74 52C84 42 100 44 108 50 100 54 84 60 76 62z" fill="#7ea83a"/><ellipse cx="99" cy="61" rx="7" ry="7" fill="#b85a22"/><circle cx="110" cy="68" r="3" fill="#c83a3a"/><circle cx="87" cy="78" r="2" fill="#d23a3a"/>
<path d="M60 91C90 92 120 86 140 84 152 90 164 108 167 122 150 132 135 136 114 143L60 136z" fill="#e8d3c7"/><path d="M70 90C90 92 120 86 140 84L145 90C120 92 90 96 72 96z" fill="#b08a5c"/>
<ellipse cx="78" cy="117" rx="41" ry="24" fill="#eca246" transform="rotate(-6 78 117)"/><ellipse cx="78" cy="117" rx="34" ry="19" fill="#f4c070" transform="rotate(-6 78 117)"/>
<path d="M60 100 76 95 108 100 110 110 92 104 70 104z" fill="#7aa93a"/><ellipse cx="88" cy="126" rx="17" ry="10" fill="#7a3114"/><circle cx="63" cy="108" r="3.500" fill="#b8465c"/><ellipse cx="62" cy="118" rx="9" ry="7" fill="#f7dfc2"/><ellipse cx="105" cy="118" rx="8" ry="5" fill="#f3ca7a"/>
<path d="M48 134C70 142 96 146 114 144 130 140 150 134 166 124 150 138 120 148 100 148 80 148 60 144 48 134z" fill="#c6b7a6"/>
</svg>
<span class="ct">Melting  Sanwatches</span><span class="cp">$10.99</span>
<svg class="a" style="left:18px;top:225px" width="12" height="14"><use href="#flame"/></svg><span class="cc" style="left:34px">44 Calories</span>
<svg class="a" style="left:143px;top:226px" width="12" height="12"><use href="#clock"/></svg><span class="cc" style="left:159px">20 min</span>
<div class="btn"><svg width="35" height="35" stroke="#fff" stroke-width="1.600"><path d="M17.500 12.500V23M12.500 17.500H23"/></svg></div></div>

<div class="card" style="left:244px;top:417px"><div class="hb"></div><svg class="a" style="left:174px;top:14px" width="18" height="18"><use href="#heart"/></svg>
<svg class="a" style="left:0;top:0" width="206" height="160">
<path d="M56 58 80 44 110 33 130 42 152 52 140 100 66 100z" fill="#e6b24e"/>
<g stroke-linecap="butt" fill="none" stroke-width="8">
<path d="M54 46 64 88" stroke="#e8b95a"/><path d="M65 48 72 92" stroke="#f0c468"/><path d="M73 50 82 98" stroke="#e3a94a"/><path d="M80 50 86 96" stroke="#f2cc78"/><path d="M92 40 88 96" stroke="#e7b352"/><path d="M104 44 94 100" stroke="#f0c468"/><path d="M110 34 100 98" stroke="#e3a94a"/><path d="M124 44 106 100" stroke="#f0c468"/><path d="M120 48 114 100" stroke="#deb04e"/><path d="M134 50 116 98" stroke="#f2cc78"/><path d="M148 50 122 96" stroke="#e7b352"/><path d="M158 56 132 90" stroke="#f0c468"/><path d="M116 66 100 96" stroke="#f6d890"/><path d="M92 72 84 92" stroke="#f6d890"/>
<path d="M76 60 64 82" stroke="#d9a03c"/><path d="M138 60 120 90" stroke="#d9a03c"/>
</g>
<defs><linearGradient id="fr" x1="0" x2="1" y1="0" y2="0"><stop offset="0" stop-color="#dd2a33"/><stop offset=".5" stop-color="#c81a22"/><stop offset="1" stop-color="#d8222c"/></linearGradient></defs>
<path d="M54 68C64 78 80 98 102 98 124 98 142 78 150 71L137 156 125 154 75 154 64 154z" fill="url(#fr)"/>
</svg>
<span class="ct">Melting Botates</span><span class="cp">$10.99</span>
<svg class="a" style="left:18px;top:225px" width="12" height="14"><use href="#flame"/></svg><span class="cc" style="left:34px">44 Calories</span>
<svg class="a" style="left:143px;top:226px" width="12" height="12"><use href="#clock"/></svg><span class="cc" style="left:159px">20 min</span>
<div class="btn"><svg width="35" height="35" stroke="#fff" stroke-width="1.600"><path d="M17.500 12.500V23M12.500 17.500H23"/></svg></div></div>

<div class="card" style="left:19px;top:748px;height:184px;overflow:hidden;border-radius:20px 20px 0 0"><div class="hb"></div><svg class="a" style="left:174px;top:14px" width="18" height="18"><use href="#heart"/></svg>
<svg class="a" style="left:0;top:0" width="206" height="160"><use href="#pizza"/></svg>
<span class="ct">Melting Cheese Pizza</span></div>
</div>
</body></html>
